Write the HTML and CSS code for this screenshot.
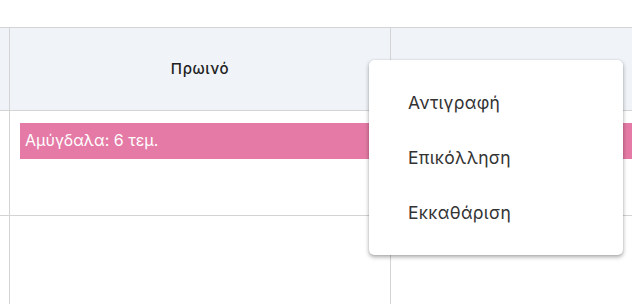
FILE: index.html
```html
<!DOCTYPE html>
<html>

	<head>
		<meta charset="UTF-8">
		<title>Πρόγραμμα γευμάτων</title>
		<link rel="stylesheet" href="styles.css">
	</head>

	<body>
		<div class="calendar">
			<div class="row head">
				<div class="cell gutter"></div>
				<div class="cell">Πρωινό</div>
				<div class="cell"></div>
			</div>
			<div class="row body">
				<div class="cell gutter"></div>
				<div class="cell"></div>
				<div class="cell"></div>
				<div class="event">Αμύγδαλα: 6 τεμ.</div>
			</div>
			<div class="row body last">
				<div class="cell gutter"></div>
				<div class="cell"></div>
				<div class="cell"></div>
			</div>

			<!-- μενού δεξιού κλικ -->
			<ul class="menu">
				<li>Αντιγραφή</li>
				<li>Επικόλληση</li>
				<li>Εκκαθάριση</li>
			</ul>
		</div>
	</body>

</html>
```

FILE: styles.css
```css
* {
	padding: 0;
	margin: 0;
	box-sizing: border-box;
}

body {
	width: 632px;
	height: 304px;
	overflow: hidden;
	background: #fff;
	font-family: "Inter", "Noto Sans", sans-serif;
	color: #222;
}

.calendar {
	position: relative;
	padding-top: 27px;
}

.row {
	display: grid;
	grid-template-columns: 10px 381px 260px;
	position: relative;
}

.cell {
	border-right: 1px solid #d4d4d4;
	border-bottom: 1px solid #d4d4d4;
}

.head {
	height: 84px;
	background: #f0f4f8;
	border-top: 1px solid #d4d4d4;
}

.head .cell {
	display: flex;
	align-items: center;
	justify-content: center;
	font-size: 15px;
	font-weight: 500;
	letter-spacing: 0.6px;
	padding-bottom: 2px;
}

.body {
	height: 105px;
}

.last {
	height: 100px;
}

.event {
	position: absolute;
	left: 20px;
	top: 12px;
	width: 640px;
	height: 36px;
	padding-left: 5px;
	line-height: 35px;
	background: #e47aa5;
	color: #fff;
	font-size: 16px;
}

.menu {
	position: absolute;
	left: 369px;
	top: 60px;
	width: 254px;
	height: 195px;
	padding: 15px 0;
	list-style: none;
	background: #fff;
	border-radius: 5px;
	box-shadow: 0 2px 4px rgba(0, 0, 0, 0.35), 0 0 1px rgba(0, 0, 0, 0.2);
}

.menu li {
	height: 55px;
	line-height: 56px;
	padding-left: 39px;
	font-size: 17.5px;
	letter-spacing: 0.3px;
	color: #333;
}
```
